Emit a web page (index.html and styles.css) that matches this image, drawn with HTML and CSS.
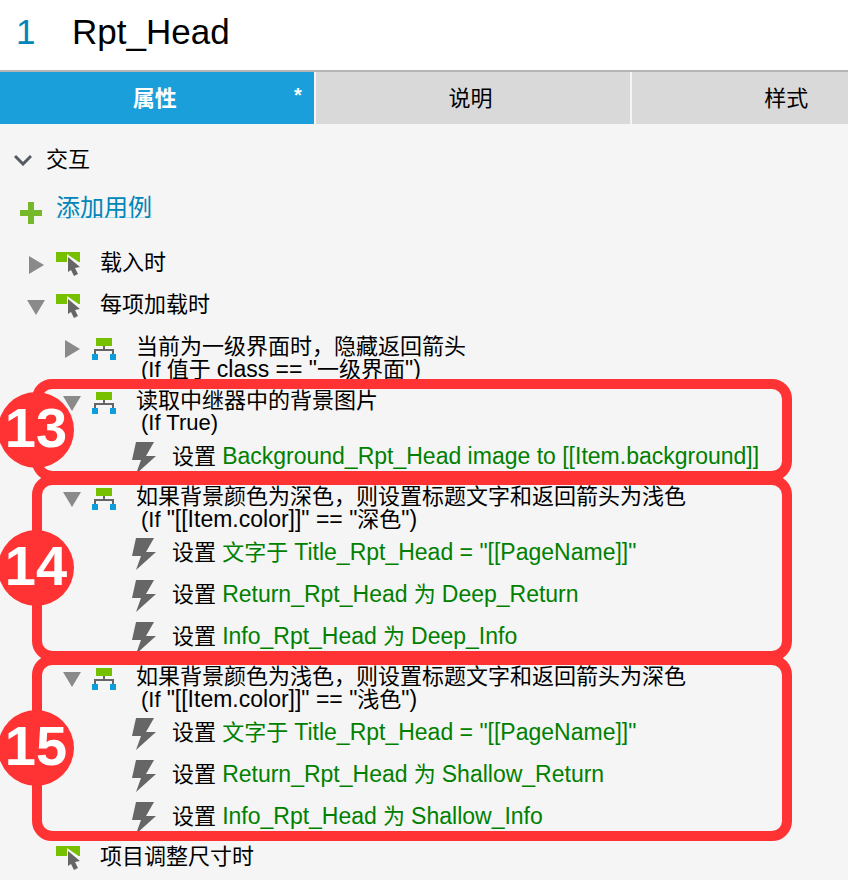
FILE: index.html
```html
<!DOCTYPE html>
<html lang="zh-CN">
<head>
    <meta charset="UTF-8">
    <meta name="viewport" content="width=device-width, initial-scale=1.0">
    <title>Rpt_Head</title>
    <link rel="stylesheet" href="styles.css">
</head>
<body>
    <!-- shared icons -->
    <svg class="sprite" aria-hidden="true">
        <symbol id="closed" viewBox="0 0 18 18"><path d="M2 0L17 9L2 18Z" fill="#8a8a8a"/></symbol>
        <symbol id="opened" viewBox="0 0 18 18"><path d="M0 2H18L9 17Z" fill="#8a8a8a"/></symbol>
        <symbol id="event" viewBox="0 0 24 26">
            <path d="M0 2H24V12H0Z" fill="#76c000"/>
            <path d="M11 4L24 13V17L12 20L11 12Z" fill="#f5f5f5"/>
            <path d="M12 7L24 17L19 18L22 24L18 26L15 20L12 22Z" fill="#666"/>
        </symbol>
        <symbol id="case" viewBox="0 0 24 24">
            <path d="M3 18V14H21V18M12 9V14" fill="none" stroke="#666" stroke-width="2"/>
            <path d="M4 2H20V10H4Z" fill="#76c000"/>
            <path d="M0 18H6V24H0ZM18 18H24V24H18Z" fill="#0d9ddb"/>
        </symbol>
        <symbol id="action" viewBox="0 0 24 32"><path d="M4 0H22L14 14H24L4 32L9 18H0Z" fill="#666"/></symbol>
    </svg>

    <header class="header">
        <span class="number">1</span>
        <h1 class="name">Rpt_Head</h1>
    </header>

    <nav class="tabs" role="tablist">
        <button class="tab active" role="tab" aria-selected="true">属性<span class="changed">*</span></button>
        <button class="tab" role="tab">说明</button>
        <button class="tab" role="tab">样式</button>
    </nav>

    <main class="panel">
        <h2 class="section">
            <svg class="chevron" viewBox="0 0 18 12"><path d="M1 2L9 10L17 2" fill="none" stroke="#555961" stroke-width="3"/></svg>
            交互
        </h2>
        <div class="add">
            <svg class="plus" viewBox="0 0 22 22"><path d="M8 0H14V8H22V14H14V22H8V14H0V8H8Z" fill="#76b82a"/></svg>
            <a href="#" class="add-link">添加用例</a>
        </div>

        <div class="event">
            <button class="toggle" aria-label="展开"><svg><use href="#closed"/></svg></button>
            <svg class="event-icon"><use href="#event"/></svg>
            <span>载入时</span>
        </div>
        <div class="event">
            <button class="toggle" aria-label="折叠"><svg><use href="#opened"/></svg></button>
            <svg class="event-icon"><use href="#event"/></svg>
            <span>每项加载时</span>
        </div>

        <div class="case">
            <button class="toggle" aria-label="展开"><svg><use href="#closed"/></svg></button>
            <svg class="case-icon"><use href="#case"/></svg>
            <div>
                <div>当前为一级界面时，隐藏返回箭头</div>
                <div class="condition">(If 值于 <span class="latin">class == "</span>一级界面<span class="latin">")</span></div>
            </div>
        </div>

        <section class="group">
            <div class="case">
                <button class="toggle" aria-label="折叠"><svg><use href="#opened"/></svg></button>
                <svg class="case-icon"><use href="#case"/></svg>
                <div>
                    <div>读取中继器中的背景图片</div>
                    <div class="condition">(If True)</div>
                </div>
            </div>
            <div class="action">
                <svg class="action-icon"><use href="#action"/></svg>
                <div>设置 <span class="value"><span class="latin">Background_Rpt_Head image to [[Item.background]]</span></span></div>
            </div>
            <div class="frame"><span class="badge">13</span></div>
        </section>

        <section class="group">
            <div class="case">
                <button class="toggle" aria-label="折叠"><svg><use href="#opened"/></svg></button>
                <svg class="case-icon"><use href="#case"/></svg>
                <div>
                    <div>如果背景颜色为深色，则设置标题文字和返回箭头为浅色</div>
                    <div class="condition">(If <span class="latin">"[[Item.color]]" == "</span>深色<span class="latin">")</span></div>
                </div>
            </div>
            <div class="action">
                <svg class="action-icon"><use href="#action"/></svg>
                <div>设置 <span class="value">文字于 <span class="latin">Title_Rpt_Head = "[[PageName]]"</span></span></div>
            </div>
            <div class="action">
                <svg class="action-icon"><use href="#action"/></svg>
                <div>设置 <span class="value"><span class="latin">Return_Rpt_Head</span> 为 <span class="latin">Deep_Return</span></span></div>
            </div>
            <div class="action">
                <svg class="action-icon"><use href="#action"/></svg>
                <div>设置 <span class="value"><span class="latin">Info_Rpt_Head</span> 为 <span class="latin">Deep_Info</span></span></div>
            </div>
            <div class="frame"><span class="badge">14</span></div>
        </section>

        <section class="group">
            <div class="case">
                <button class="toggle" aria-label="折叠"><svg><use href="#opened"/></svg></button>
                <svg class="case-icon"><use href="#case"/></svg>
                <div>
                    <div>如果背景颜色为浅色，则设置标题文字和返回箭头为深色</div>
                    <div class="condition">(If <span class="latin">"[[Item.color]]" == "</span>浅色<span class="latin">")</span></div>
                </div>
            </div>
            <div class="action">
                <svg class="action-icon"><use href="#action"/></svg>
                <div>设置 <span class="value">文字于 <span class="latin">Title_Rpt_Head = "[[PageName]]"</span></span></div>
            </div>
            <div class="action">
                <svg class="action-icon"><use href="#action"/></svg>
                <div>设置 <span class="value"><span class="latin">Return_Rpt_Head</span> 为 <span class="latin">Shallow_Return</span></span></div>
            </div>
            <div class="action">
                <svg class="action-icon"><use href="#action"/></svg>
                <div>设置 <span class="value"><span class="latin">Info_Rpt_Head</span> 为 <span class="latin">Shallow_Info</span></span></div>
            </div>
            <div class="frame"><span class="badge">15</span></div>
        </section>

        <div class="event leaf">
            <svg class="event-icon"><use href="#event"/></svg>
            <span>项目调整尺寸时</span>
        </div>
    </main>
</body>
</html>
```

FILE: styles.css
```css
* {
    box-sizing: border-box;
}

body {
    margin: 0;
    background-color: #f5f5f5;
    color: #000;
    font-family: "Liberation Sans", "Noto Sans CJK SC", sans-serif;
    font-size: 22px;
    line-height: 22px;
}

svg {
    display: block;
    flex: none;
}

.sprite {
    position: absolute;
    width: 0;
    height: 0;
}

.header {
    display: flex;
    align-items: center;
    height: 72px;
    padding: 0 16px 6px;
    background-color: #fff;
    border-bottom: 2px solid #b5b5b5;
    font-size: 35px;
    line-height: 40px;
}

.number {
    width: 56px;
    color: #0086b8;
}

.name {
    margin: 0;
    font-size: 35px;
    font-weight: normal;
}

.tabs {
    display: flex;
    gap: 2px;
    overflow: hidden;
}

.tab {
    position: relative;
    flex: 0 0 37%;
    height: 52px;
    padding: 2px 4px 0 0;
    border: none;
    background-color: #d9d9d9;
    color: #000;
    font: inherit;
}

.active {
    background-color: #1a9fda;
    color: #fff;
    font-weight: bold;
}

.changed {
    position: absolute;
    top: 12px;
    right: 12px;
    font-size: 20px;
}

.panel {
    padding-top: 12px;
}

.section {
    display: flex;
    align-items: center;
    gap: 14px;
    height: 48px;
    margin: 0;
    padding-left: 14px;
    font-size: 22px;
    font-weight: normal;
}

.chevron {
    width: 18px;
    height: 12px;
}

.add {
    display: flex;
    align-items: center;
    gap: 14px;
    height: 58px;
    padding-left: 20px;
}

.plus {
    width: 22px;
    height: 22px;
}

.add-link {
    margin-bottom: 10px;
    color: #0086b8;
    font-size: 24px;
    text-decoration: underline 1px #b5dcea;
    text-underline-offset: 1px;
}

.event {
    display: flex;
    align-items: center;
    height: 42px;
    padding-left: 27px;
}

.leaf {
    padding-left: 56px;
}

.toggle {
    width: 18px;
    height: 18px;
    margin: 4px 11px 0 0;
    padding: 0;
    border: none;
    background: none;
}

.toggle svg {
    width: 18px;
    height: 18px;
}

.event-icon {
    width: 24px;
    height: 26px;
    margin-right: 20px;
}

.case {
    display: flex;
    align-items: flex-start;
    height: 54px;
    padding: 10px 0 0 63px;
}

.case-icon {
    width: 24px;
    height: 24px;
    margin-right: 20px;
}

.condition {
    padding-left: 5px;
}

.action {
    display: flex;
    align-items: center;
    gap: 16px;
    height: 42px;
    padding: 2px 0 0 132px;
}

.action-icon {
    width: 24px;
    height: 32px;
    margin-top: 4px;
}

.value {
    color: #008000;
}

.latin {
    font-size: 23px;
}

.group {
    position: relative;
}

/* numbered callout drawn over the group */
.frame {
    position: absolute;
    top: -1px;
    right: 56px;
    bottom: -5px;
    left: 32px;
    border: 10px solid #f33;
    border-radius: 20px;
    pointer-events: none;
}

.badge {
    position: absolute;
    top: 50%;
    left: -44px;
    width: 76px;
    height: 76px;
    border-radius: 50%;
    background-color: #f33;
    color: #fff;
    font-size: 56px;
    font-weight: bold;
    line-height: 72px;
    text-align: center;
    transform: translateY(-50%);
}
```
